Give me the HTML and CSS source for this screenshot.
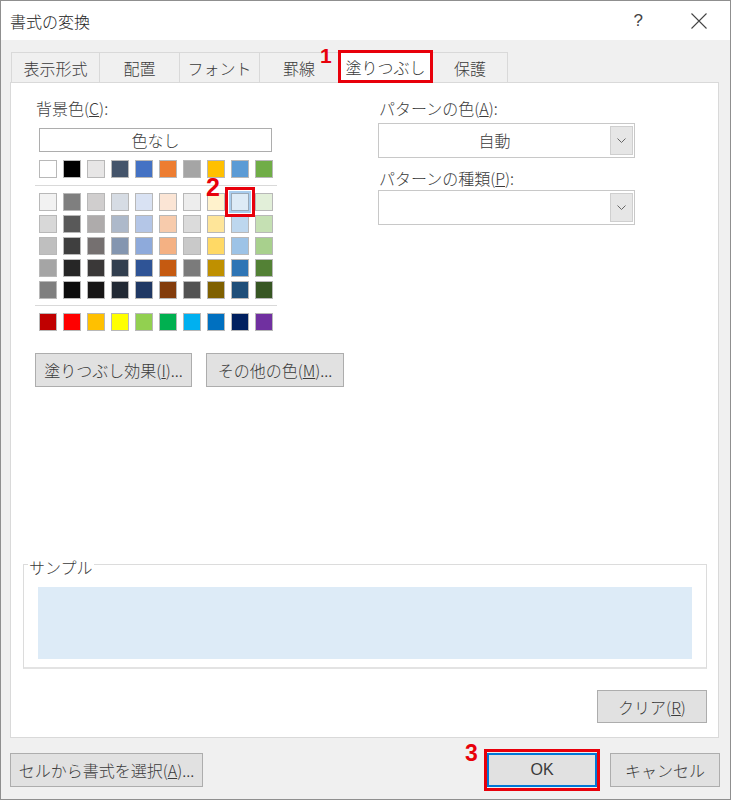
FILE: index.html
```html
<!DOCTYPE html>
<html lang="ja">
<head>
  <meta charset="UTF-8">
  <meta name="viewport" content="width=device-width, initial-scale=1.0">
  <title>書式の変換</title>
  <link rel="stylesheet" href="styles.css">
</head>
<body>

  <div class="dialog">
    <div class="titlebar">
      <span class="title">書式の変換</span>
      <span class="help">?</span>
      <span class="close">
        <svg width="16" height="16" viewBox="0 0 16 16"><path d="M0.5 0.5 L15.5 15.5 M15.5 0.5 L0.5 15.5" stroke="#444" stroke-width="1.1" fill="none"/></svg>
      </span>
    </div>

    <div class="main">
      <div class="tabs">
        <div class="tab tab-number">表示形式</div>
        <div class="tab tab-align">配置</div>
        <div class="tab tab-font">フォント</div>
        <div class="tab tab-border">罫線</div>
        <div class="tab tab-fill active">塗りつぶし<span class="step step1">1</span></div>
        <div class="tab tab-protect">保護</div>
      </div>

      <div class="panel">
        <div class="fill-top">
          <div class="left-col">
            <div class="label">背景色(<u>C</u>):</div>
            <div class="no-color">色なし</div>
            <div class="swatches" id="themeRow"></div>
            <div class="sep"></div>
            <div class="swatches" id="shadeRows"></div>
            <div class="sep sep-low"></div>
            <div class="swatches" id="standardRow"></div>
            <div class="btn-row">
              <button class="btn effect-btn">塗りつぶし効果(<u>I</u>)...</button>
              <button class="btn more-btn">その他の色(<u>M</u>)...</button>
            </div>
          </div>

          <div class="right-col">
            <div class="label">パターンの色(<u>A</u>):</div>
            <div class="combo">
              <span class="combo-text">自動</span>
              <span class="combo-btn"><svg width="9" height="5" viewBox="0 0 9 5"><path d="M0.5 0.5 L4.5 4.5 L8.5 0.5" stroke="#666" stroke-width="1" fill="none"/></svg></span>
            </div>
            <div class="label label-second">パターンの種類(<u>P</u>):</div>
            <div class="combo combo-second">
              <span class="combo-text"></span>
              <span class="combo-btn"><svg width="9" height="5" viewBox="0 0 9 5"><path d="M0.5 0.5 L4.5 4.5 L8.5 0.5" stroke="#666" stroke-width="1" fill="none"/></svg></span>
            </div>
          </div>
        </div>

        <fieldset class="sample">
          <legend>サンプル</legend>
          <div class="sample-fill"></div>
        </fieldset>

        <div class="clear-row">
          <button class="btn clear-btn">クリア(<u>R</u>)</button>
        </div>
      </div>

      <div class="footer">
        <button class="btn pick-btn">セルから書式を選択(<u>A</u>)...</button>
        <span class="ok-mark">
          <button class="btn ok-btn">OK</button>
          <span class="step step3">3</span>
        </span>
        <button class="btn cancel-btn">キャンセル</button>
      </div>
    </div>
  </div>

  <script>
    const themeColors = ['#FFFFFF', '#000000', '#E7E6E6', '#44546A', '#4472C4', '#ED7D31', '#A5A5A5', '#FFC000', '#5B9BD5', '#70AD47'];
    const shadeColors = [
      ['#F2F2F2', '#7F7F7F', '#D0CECE', '#D6DCE4', '#D9E2F3', '#FBE5D5', '#EDEDED', '#FFF2CC', '#DEEBF6', '#E2EFD9'],
      ['#D8D8D8', '#595959', '#AEABAB', '#ADB9CA', '#B4C6E7', '#F7CBAC', '#DBDBDB', '#FEE599', '#BDD7EE', '#C5E0B3'],
      ['#BFBFBF', '#3F3F3F', '#757070', '#8496B0', '#8EAADB', '#F4B183', '#C9C9C9', '#FFD965', '#9DC3E6', '#A8D08D'],
      ['#A5A5A5', '#262626', '#3A3838', '#323F4F', '#2F5496', '#C55A11', '#7B7B7B', '#BF9000', '#2E75B5', '#538135'],
      ['#7F7F7F', '#0C0C0C', '#171616', '#222A35', '#1F3864', '#833C0B', '#525252', '#7F6000', '#1E4E79', '#375623']
    ];
    const standardColors = ['#C00000', '#FF0000', '#FFC000', '#FFFF00', '#92D050', '#00B050', '#00B0F0', '#0070C0', '#002060', '#7030A0'];

    function addSwatch(parent, color) {
      const sw = document.createElement('div');
      sw.className = 'swatch';
      sw.style.backgroundColor = color;
      parent.appendChild(sw);
      return sw;
    }

    const themeRow = document.getElementById('themeRow');
    themeColors.forEach(c => addSwatch(themeRow, c));

    const shadeRows = document.getElementById('shadeRows');
    shadeColors.forEach((row, r) => {
      row.forEach((c, i) => {
        const sw = addSwatch(shadeRows, c);
        // the picked colour
        if (r === 0 && i === 8) {
          sw.classList.add('selected');
          const num = document.createElement('span');
          num.className = 'step step2';
          num.textContent = '2';
          sw.appendChild(num);
        }
      });
    });

    const standardRow = document.getElementById('standardRow');
    standardColors.forEach(c => addSwatch(standardRow, c));
  </script>
</body>
</html>
```

FILE: styles.css
```css
html, body {
  margin: 0;
  padding: 0;
}

body {
  font-family: "Noto Sans CJK JP", "Noto Sans", sans-serif;
  font-size: 16px;
  font-weight: 300;
  color: #3a3a3a;
}

.dialog {
  width: 731px;
  height: 800px;
  box-sizing: border-box;
  border: 1px solid #8f8f8f;
  background-color: #f0f0f0;
  display: flex;
  flex-direction: column;
}

/* Title bar */
.titlebar {
  height: 39px;
  background-color: #fff;
  display: flex;
  align-items: center;
  padding: 0 23px 0 9px;
}

.title {
  flex: 1;
  color: #222;
  line-height: 20px;
}

.help {
  font-family: "Liberation Sans", Arial, sans-serif;
  font-size: 17px;
  color: #444;
  margin-right: 48px;
}

.close {
  display: flex;
}

/* Body */
.main {
  flex: 1;
  padding: 10px 10px 0 9px;
  display: flex;
  flex-direction: column;
}

.tabs {
  display: flex;
  align-items: flex-end;
  height: 32px;
  margin-left: 1px;
}

.tab {
  height: 30px;
  box-sizing: border-box;
  border: 1px solid #d9d9d9;
  border-bottom: none;
  margin-left: -1px;
  text-align: center;
  line-height: 31px;
}

.tab-number { width: 89px; margin-left: 0; }
.tab-align { width: 81px; }
.tab-font { width: 81px; }
.tab-border { width: 80px; }
.tab-protect { width: 76px; }

.tab.active {
  width: 95px;
  height: 33px;
  margin-bottom: -1px;
  background-color: #fff;
  border: 3px solid #e8000b;
  line-height: 29px;
  position: relative;
  z-index: 1;
}

.step {
  position: absolute;
  font-family: "Liberation Sans", Arial, sans-serif;
  font-weight: bold;
  color: #e8000b;
  line-height: 1;
}

.step1 {
  font-size: 21px;
  left: -21px;
  top: -8px;
}

.step2 {
  font-size: 25px;
  left: -26px;
  top: -19px;
}

.step3 {
  font-size: 23px;
  left: -22px;
  top: -10px;
}

.panel {
  height: 656px;
  box-sizing: border-box;
  margin-right: 1px;
  background-color: #fff;
  border: 1px solid #d9d9d9;
  padding: 15px 11px 14px 12px;
  display: flex;
  flex-direction: column;
}

.fill-top {
  display: flex;
  padding-left: 12px;
}

.left-col {
  width: 242px;
  flex-shrink: 0;
}

.right-col {
  width: 257px;
  margin-left: 101px;
}

.label {
  line-height: 20px;
  height: 20px;
  padding-left: 1px;
  white-space: nowrap;
}

.no-color {
  margin: 10px 5px 0 4px;
  height: 24px;
  box-sizing: border-box;
  border: 1px solid #adadad;
  text-align: center;
  line-height: 22px;
}

.swatches {
  display: grid;
  grid-template-columns: repeat(10, 18px);
  column-gap: 6px;
  row-gap: 4px;
  padding-left: 4px;
}

#themeRow {
  margin-top: 8px;
}

.swatch {
  width: 18px;
  height: 18px;
  box-sizing: border-box;
  border: 1px solid #b8b8b8;
}

.swatch.selected {
  position: relative;
  border-color: #9aa9b8;
  box-shadow: 0 0 0 2px #a9cdee;
  outline: 3px solid #e8000b;
  outline-offset: 3px;
}

.sep {
  height: 1px;
  background-color: #d9d9d9;
  margin: 7px 0;
}

.sep-low {
  margin-top: 6px;
}

.btn-row {
  display: flex;
  gap: 14px;
  margin-top: 22px;
}

.btn {
  font-family: inherit;
  font-size: 16px;
  font-weight: 300;
  color: #3a3a3a;
  background-color: #e1e1e1;
  border: 1px solid #adadad;
  height: 34px;
  box-sizing: border-box;
  padding: 0;
  line-height: 30px;
  white-space: nowrap;
  flex-shrink: 0;
}

.effect-btn { width: 157px; }
.more-btn { width: 138px; }

.combo {
  margin-top: 5px;
  height: 35px;
  box-sizing: border-box;
  border: 1px solid #c8c8c8;
  display: flex;
  padding: 2px 1px 2px 0;
}

.combo-second {
  margin-top: 2px;
}

.label-second {
  margin-top: 10px;
}

.combo-text {
  flex: 1;
  text-align: center;
  line-height: 29px;
}

.combo-btn {
  width: 23px;
  box-sizing: border-box;
  background-color: #e6e6e6;
  border: 1px solid #cfcfcf;
  display: flex;
  align-items: center;
  justify-content: center;
}

/* Sample */
.sample {
  margin: auto 0 0 0;
  padding: 0;
  min-width: 0;
  border: 1px solid #dcdcdc;
  border-bottom: 2px solid #e3e3e3;
}

.sample legend {
  margin-left: 4px;
  padding: 6px 1px 0 1px;
  line-height: 16px;
}

.sample-fill {
  height: 72px;
  margin: 12px 14px 8px 14px;
  background-color: #ddebf7;
}

.clear-row {
  display: flex;
  justify-content: flex-end;
  margin-top: 21px;
}

.clear-btn {
  width: 110px;
  height: 33px;
}

/* Footer */
.footer {
  display: flex;
  align-items: center;
  padding-top: 11px;
}

.pick-btn {
  width: 193px;
}

.ok-mark {
  margin-left: auto;
  position: relative;
  display: flex;
  border: 3px solid #e8000b;
  padding: 1px 0;
}

.ok-btn {
  width: 110px;
  border-color: #0078d7;
  box-shadow: inset 0 0 0 1px #0078d7;
  font-family: "Liberation Sans", Arial, sans-serif;
  font-weight: normal;
}

.cancel-btn {
  width: 110px;
  margin-left: 10px;
}
```
